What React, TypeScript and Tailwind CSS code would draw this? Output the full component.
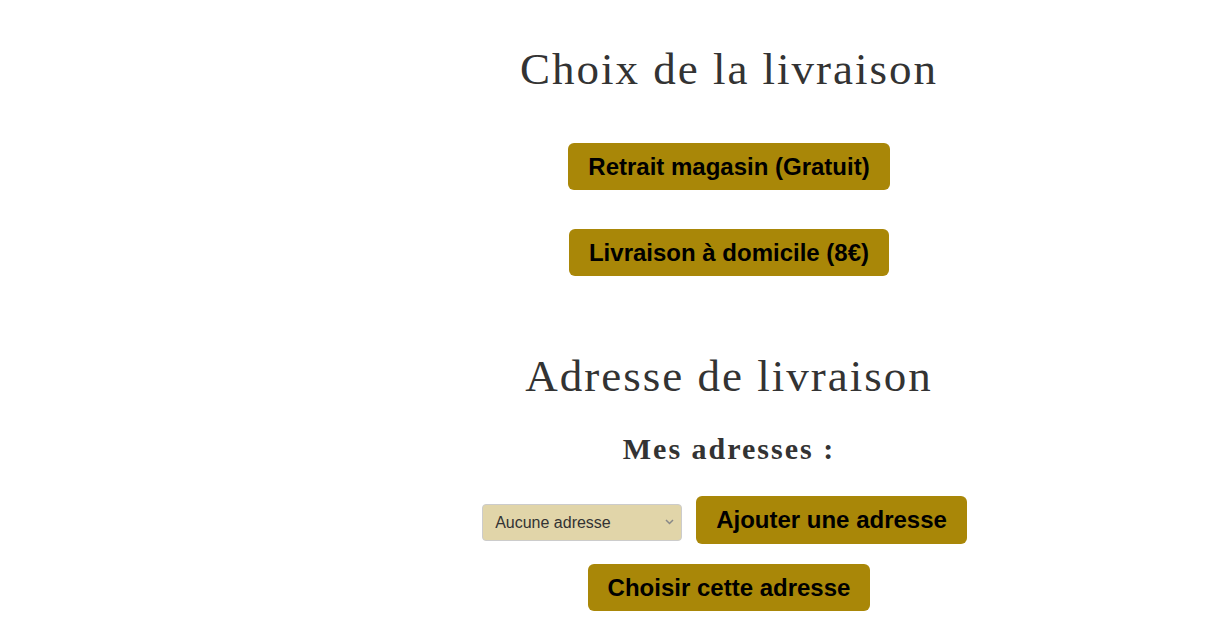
export default function App() {
    return (
        <div className="flex min-h-[632px] w-full bg-white font-['Liberation_Sans',Arial,sans-serif]">
            <div className="w-[236px] shrink-0"></div>
            <div className="flex flex-1 flex-col items-center">
                <h1 className="mt-[43px] font-['Liberation_Serif','Times_New_Roman',serif] text-[45px] leading-[52px] tracking-[2px] text-[#333]">
                    Choix de la livraison
                </h1>
                <button className="mt-[48px] rounded-md bg-[#a98708] px-5 py-[10px] text-[24px] leading-[27px] font-bold text-black">
                    Retrait magasin (Gratuit)
                </button>
                <button className="mt-[39px] rounded-md bg-[#a98708] px-5 py-[10px] text-[24px] leading-[27px] font-bold text-black">
                    Livraison à domicile (8€)
                </button>

                <h1 className="mt-[74px] font-['Liberation_Serif','Times_New_Roman',serif] text-[45px] leading-[52px] tracking-[2px] text-[#333]">
                    Adresse de livraison
                </h1>
                <h3 className="mt-[30px] font-['Liberation_Serif','Times_New_Roman',serif] text-[30px] leading-[34px] font-bold tracking-[2px] text-[#333]">
                    Mes adresses :
                </h3>
                <div className="mt-[30px] mr-[9px] flex items-start gap-[14px]">
                    <div className="relative mt-[8px]">
                        <select className="h-[37px] w-[200px] appearance-none rounded border border-[#ccc] bg-[#e1d5a9] pl-3 text-[16px] text-[#333]">
                            <option>Aucune adresse</option>
                        </select>
                        <svg className="pointer-events-none absolute right-[8px] top-[15px]" width="9" height="6" viewBox="0 0 9 6" fill="none">
                            <path d="M1 1l3.5 3.5L8 1" stroke="#888" strokeWidth="1.5"/>
                        </svg>
                    </div>
                    <button className="rounded-md bg-[#a98708] px-5 py-[10px] text-[24px] leading-[28px] font-bold text-black">
                        Ajouter une adresse
                    </button>
                </div>
                <button className="mt-[20px] rounded-md bg-[#a98708] px-5 py-[10px] text-[24px] leading-[27px] font-bold text-black">
                    Choisir cette adresse
                </button>
            </div>
        </div>
    );
}
